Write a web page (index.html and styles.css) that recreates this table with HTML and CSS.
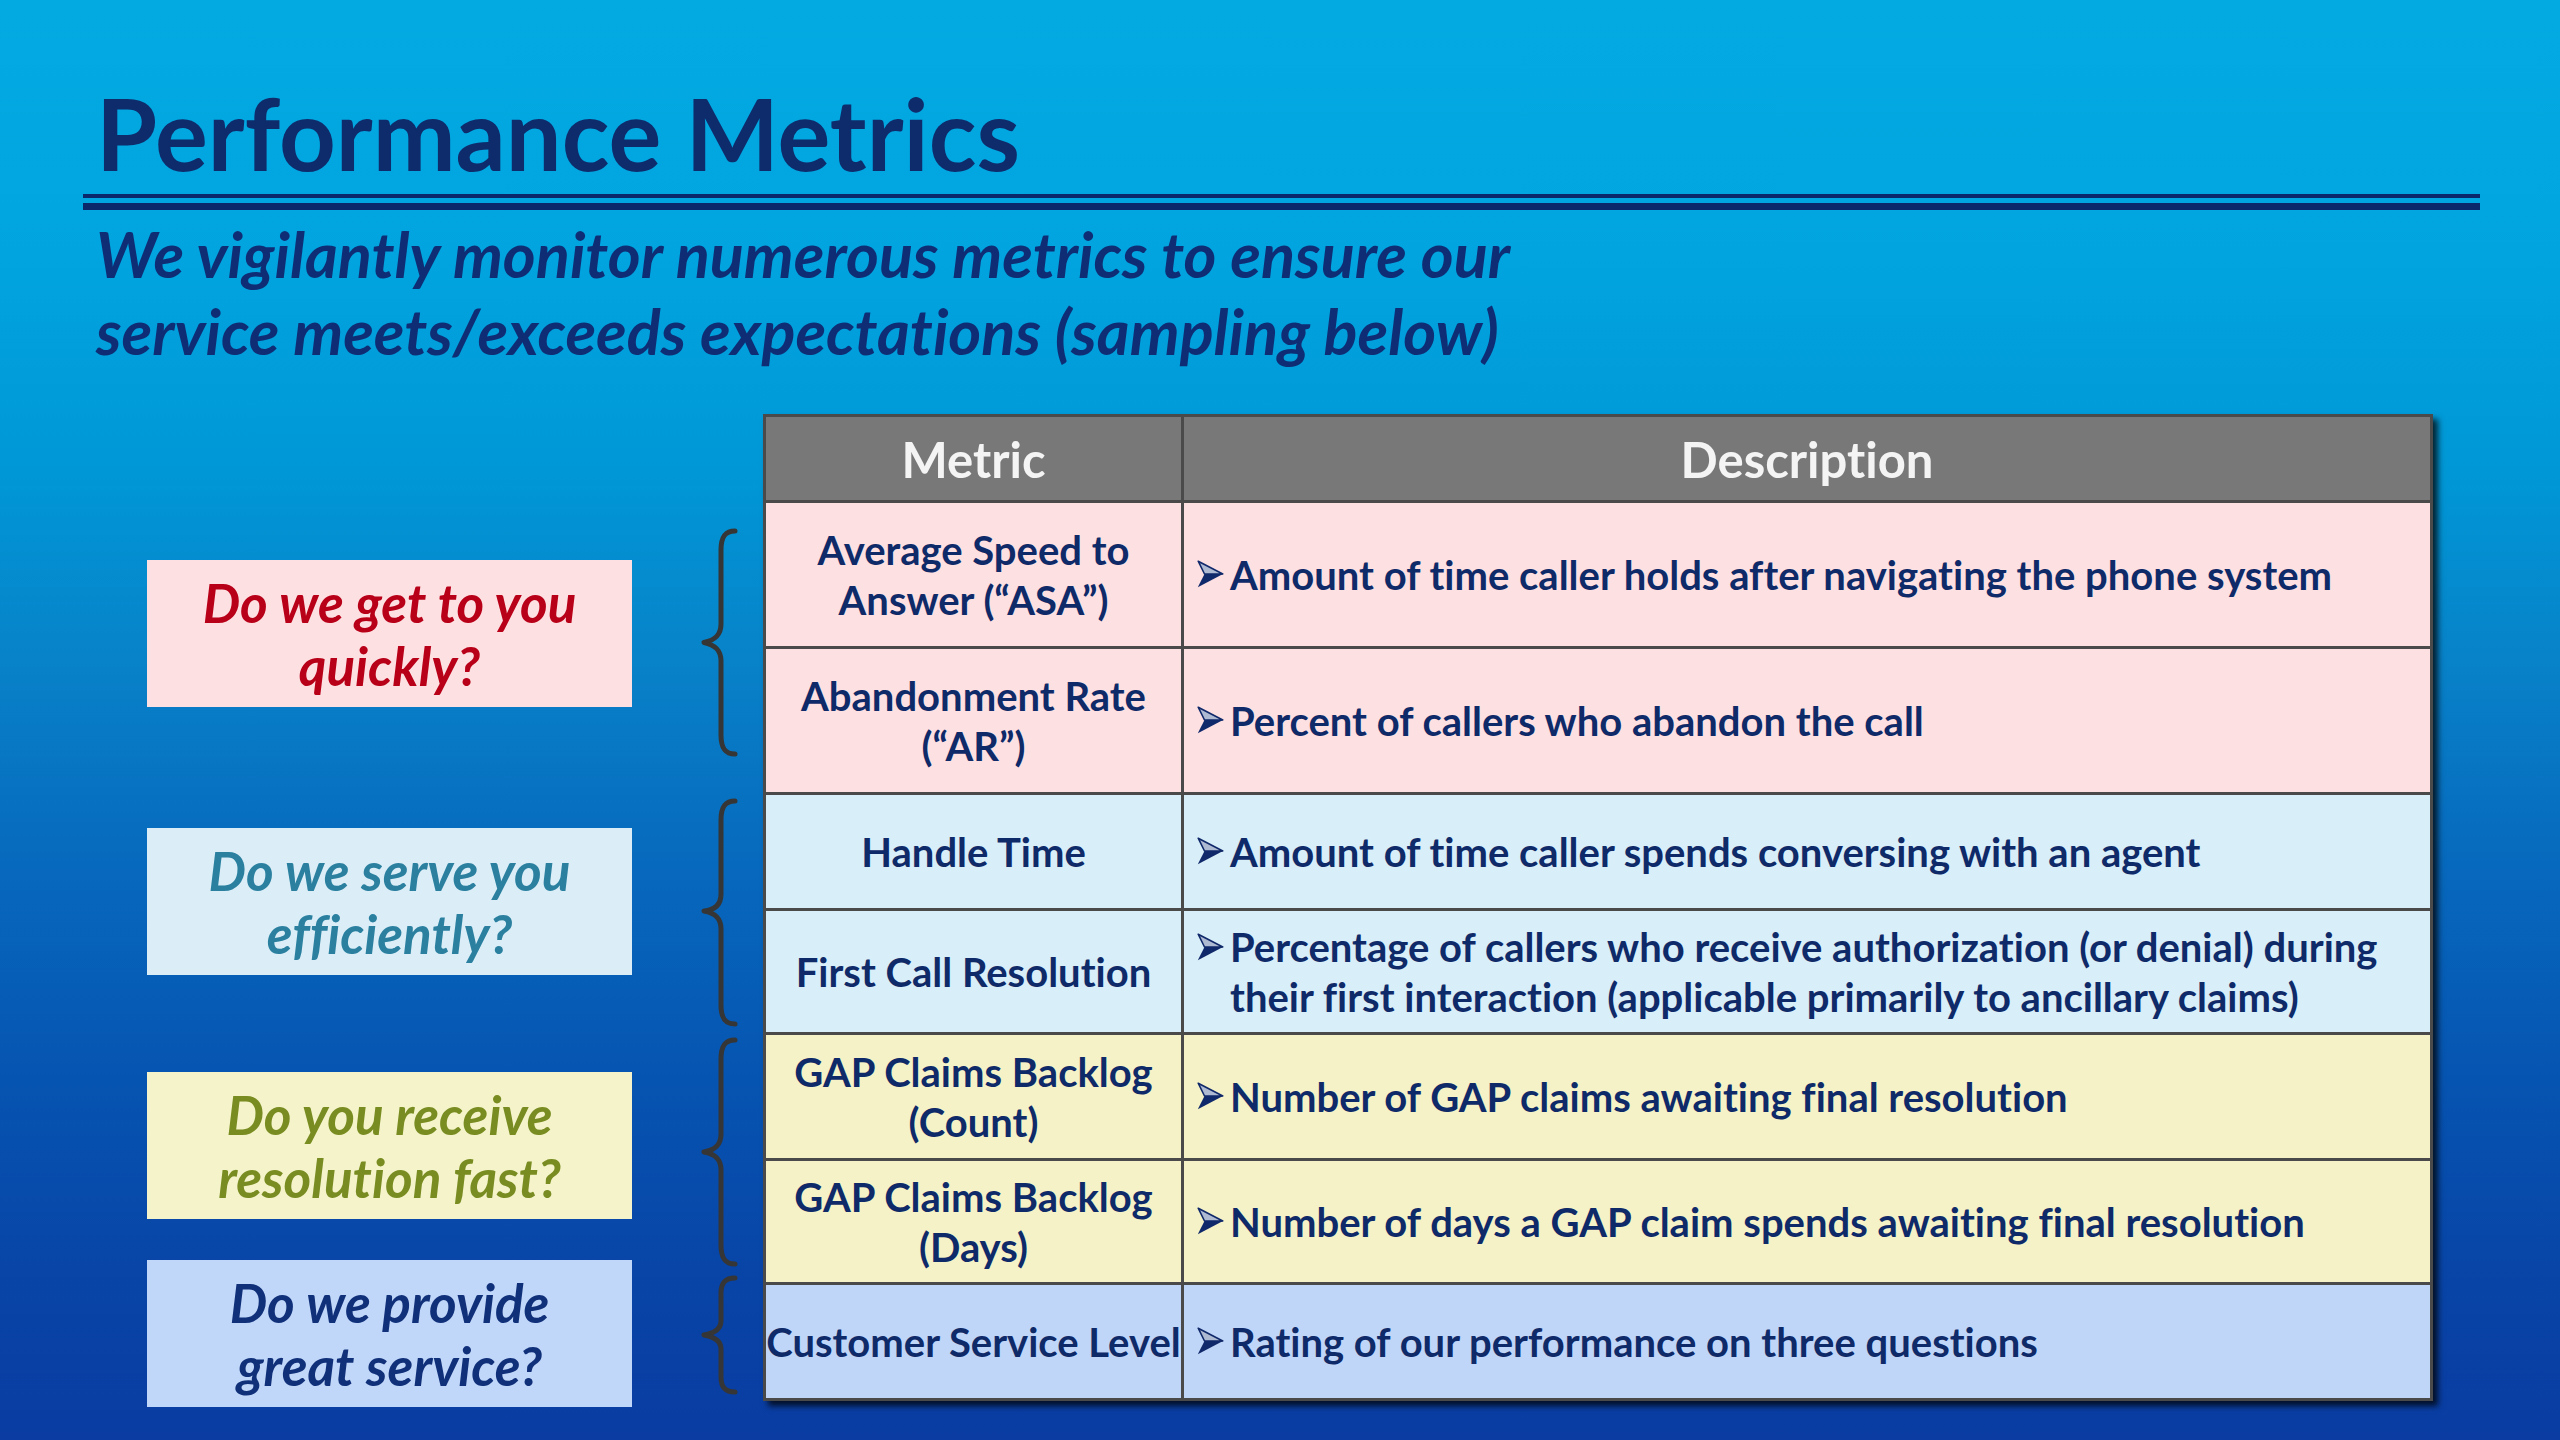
FILE: index.html
```html
<!DOCTYPE html>
<html lang="en">
<head>
<meta charset="utf-8">
<title>Performance Metrics</title>
<link rel="stylesheet" href="styles.css">
</head>
<body>
<svg class="defs" width="0" height="0" aria-hidden="true">
  <defs>
    <symbol id="arrow" viewBox="0 0 27 28">
      <path d="M1.2 1.2 L25.8 14 L7.5 14 Z" fill="#aeb9d2" stroke="#10296a" stroke-width="1.6" stroke-linejoin="round"/>
      <path d="M7.5 14 L26 14 L0.8 27.2 Z" fill="#10296a"/>
    </symbol>
  </defs>
</svg>
<div class="slide">
  <h1 class="title">Performance Metrics</h1>
  <div class="rule"></div>
  <p class="subtitle">We vigilantly monitor numerous metrics to ensure our<br>service meets/exceeds expectations (sampling below)</p>

  <div class="content">
    <div class="questions">
      <div class="q q-red">Do we get to you<br>quickly?</div>
      <div class="q q-teal">Do we serve you<br>efficiently?</div>
      <div class="q q-olive">Do you receive<br>resolution fast?</div>
      <div class="q q-navy">Do we provide<br>great service?</div>
    </div>

    <div class="braces">
      <svg class="brace b1" width="40" height="229" viewBox="0 0 40 229"><path d="M35 3 C25 3 21 9 21 22 L21 96 C21 107 15 112 4 114.5 C15 117 21 122 21 133 L21 207 C21 220 25 226 35 226"/></svg>
      <svg class="brace b2" width="40" height="229" viewBox="0 0 40 229"><path d="M35 3 C25 3 21 9 21 22 L21 96 C21 107 15 112 4 113 C15 115 21 120 21 131 L21 207 C21 220 25 226 35 226"/></svg>
      <svg class="brace b3" width="40" height="230" viewBox="0 0 40 230"><path d="M35 3 C25 3 21 9 21 22 L21 97 C21 108 15 113 4 115 C15 117 21 122 21 133 L21 208 C21 221 25 227 35 227"/></svg>
      <svg class="brace b4" width="40" height="120" viewBox="0 0 40 120"><path d="M35 3 C25 3 21 8 21 18 L21 46 C21 54 15 58 4 60 C15 62 21 66 21 74 L21 102 C21 112 25 117 35 117"/></svg>
    </div>

    <div class="metrics">
      <div class="cell head">Metric</div>
      <div class="cell head">Description</div>

      <div class="cell name pink">Average Speed to<br>Answer (“ASA”)</div>
      <div class="cell desc pink"><svg class="bullet"><use href="#arrow"/></svg><span>Amount of time caller holds after navigating the phone system</span></div>

      <div class="cell name pink">Abandonment Rate<br>(“AR”)</div>
      <div class="cell desc pink"><svg class="bullet"><use href="#arrow"/></svg><span>Percent of callers who abandon the call</span></div>

      <div class="cell name cyan">Handle Time</div>
      <div class="cell desc cyan"><svg class="bullet"><use href="#arrow"/></svg><span>Amount of time caller spends conversing with an agent</span></div>

      <div class="cell name cyan">First Call Resolution</div>
      <div class="cell desc cyan two-line"><svg class="bullet"><use href="#arrow"/></svg><span>Percentage of callers who receive authorization (or denial) during<br>their first interaction (applicable primarily to ancillary claims)</span></div>

      <div class="cell name yellow">GAP Claims Backlog<br>(Count)</div>
      <div class="cell desc yellow"><svg class="bullet"><use href="#arrow"/></svg><span>Number of GAP claims awaiting final resolution</span></div>

      <div class="cell name yellow">GAP Claims Backlog<br>(Days)</div>
      <div class="cell desc yellow"><svg class="bullet"><use href="#arrow"/></svg><span>Number of days a GAP claim spends awaiting final resolution</span></div>

      <div class="cell name blue">Customer Service Level</div>
      <div class="cell desc blue"><svg class="bullet"><use href="#arrow"/></svg><span>Rating of our performance on three questions</span></div>
    </div>
  </div>
</div>
</body>
</html>
```
FILE: styles.css
```css
html, body {
  margin: 0;
  padding: 0;
}

body {
  width: 2560px;
  height: 1440px;
  overflow: hidden;
  background: linear-gradient(180deg,
    #03aae2 0%,
    #01a4df 18%,
    #0097d6 33%,
    #0882c9 46%,
    #0769bd 60%,
    #0654b1 75%,
    #0845a7 88%,
    #0a3ca2 100%);
  font-family: "Lato", "Liberation Sans", Arial, sans-serif;
  font-weight: bold;
  font-variant-ligatures: no-common-ligatures no-discretionary-ligatures;
  font-feature-settings: "liga" 0, "dlig" 0;
}

.defs {
  position: absolute;
  width: 0;
  height: 0;
}

.slide {
  display: flex;
  flex-direction: column;
  align-items: flex-start;
}

.title {
  margin: 83px 0 0 96px;
  font-size: 99px;
  line-height: 99px;
  font-weight: bold;
  color: #0e2b6c;
}

.rule {
  margin: 12px 0 0 83px;
  width: 2397px;
  height: 5px;
  border-top: 4px solid #0b286b;
  border-bottom: 7px solid #0b286b;
}

.subtitle {
  margin: 5px 0 0 96px;
  font-size: 63px;
  line-height: 77px;
  font-style: italic;
  color: #0f2d74;
}

.content {
  display: flex;
  align-items: flex-start;
  margin-top: 45px;
  padding-left: 147px;
}

/* question boxes */
.questions {
  width: 485px;
  display: flex;
  flex-direction: column;
}

.q {
  height: 147px;
  display: flex;
  align-items: center;
  justify-content: center;
  text-align: center;
  font-style: italic;
  font-size: 53px;
  line-height: 63px;
}

.q-red   { margin-top: 146px; background: #fde1e2; color: #b80019; }
.q-teal  { margin-top: 121px; background: #dbeef8; color: #2b80a0; }
.q-olive { margin-top: 97px;  background: #f5f3c9; color: #788c21; }
.q-navy  { margin-top: 41px;  background: #c1d7f9; color: #10307a; }

/* braces */
.braces {
  margin-left: 68px;
  width: 40px;
  display: flex;
  flex-direction: column;
}

.brace path {
  fill: none;
  stroke: #363636;
  stroke-width: 5;
  stroke-linecap: round;
  stroke-linejoin: round;
}

.b1 { margin-top: 114px; }
.b2 { margin-top: 41px; }
.b3 { margin-top: 10px; }
.b4 { margin-top: 8px; }

/* metrics table */
.metrics {
  margin-left: 23px;
  width: 1670px;
  box-sizing: border-box;
  display: grid;
  grid-template-columns: 415px 1246px;
  grid-template-rows: 83px 143px 143px 113px 121px 123px 121px 113px;
  gap: 3px;
  padding: 3px;
  background: #4a4a4a;
  box-shadow: 5px 5px 6px rgba(0, 0, 0, 0.75);
}

.cell {
  display: flex;
  align-items: center;
  color: #0f2a68;
  font-size: 40px;
  line-height: 50px;
}

.head {
  justify-content: center;
  background: #787878;
  color: #f4f4f4;
  font-size: 49px;
  line-height: 60px;
}

.name {
  justify-content: center;
  text-align: center;
  white-space: nowrap;
}

.desc {
  padding-left: 13px;
  white-space: nowrap;
}

.desc span {
  margin-left: 6px;
}

.bullet {
  flex: none;
  align-self: center;
  width: 27px;
  height: 28px;
  margin-top: -2px;
}

.two-line .bullet {
  align-self: flex-start;
  margin-top: 22px;
}

.pink   { background: #fde0e2; }
.cyan   { background: #d8eef8; }
.yellow { background: #f5f2c7; }
.blue   { background: #c0d6f8; }
```
